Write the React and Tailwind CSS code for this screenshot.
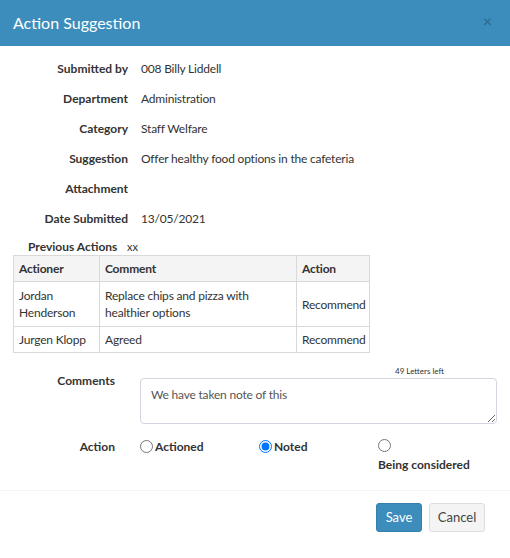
export default function App() {
  const details = [
    ["Submitted by", "008 Billy Liddell"],
    ["Department", "Administration"],
    ["Category", "Staff Welfare"],
    ["Suggestion", "Offer healthy food options in the cafeteria"],
    ["Attachment", ""],
    ["Date Submitted", "13/05/2021"],
  ];

  const cell = "border border-[#d9d9d9] px-[5px] font-normal tracking-[-0.2px]";

  return (
    <div
      className="w-[510px] h-[558px] bg-white text-[12px] text-[#333]"
      style={{ fontFamily: "Lato, 'Liberation Sans', sans-serif" }}
    >
      <div className="h-[46px] bg-[#3c8dbc] px-[13px] flex items-center justify-between">
        <h4 className="text-white text-[16px]">Action Suggestion</h4>
        <span className="text-[#2f6f96] text-[16px] font-bold leading-none -mt-[5px] mr-[5px]">×</span>
      </div>

      <div className="pt-[8px]">
        {details.map(([label, value]) => (
          <div key={label} className="grid grid-cols-[128px_1fr] gap-x-[13px] h-[30px] items-center">
            <div className="text-right font-bold">{label}</div>
            <div className="tracking-[-0.2px]">{value}</div>
          </div>
        ))}

        <div className="flex pl-[28px] pt-[4px] leading-[17px]">
          <span className="font-bold w-[99px]">Previous Actions</span>
          <span className="text-[11px]">xx</span>
        </div>

        <table className="ml-[13px] w-[357px] border-collapse leading-[17px] table-fixed">
          <thead>
            <tr className="bg-[#f4f4f4]">
              <th className={`${cell} w-[86px] py-[4px] text-left !font-bold`}>Actioner</th>
              <th className={`${cell} w-[197px] py-[4px] text-left !font-bold`}>Comment</th>
              <th className={`${cell} py-[4px] text-left !font-bold`}>Action</th>
            </tr>
          </thead>
          <tbody>
            <tr>
              <td className={`${cell} py-[5px]`}>Jordan Henderson</td>
              <td className={`${cell} py-[5px]`}>Replace chips and pizza with healthier options</td>
              <td className={`${cell} py-[5px]`}>Recommend</td>
            </tr>
            <tr>
              <td className={`${cell} py-[4px]`}>Jurgen Klopp</td>
              <td className={`${cell} py-[4px]`}>Agreed</td>
              <td className={`${cell} py-[4px]`}>Recommend</td>
            </tr>
          </tbody>
        </table>

        <div className="grid grid-cols-[115px_357px] gap-x-[25px] mt-[13px]">
          <div className="text-right font-bold pt-[6px]">Comments</div>
          <div>
            <div className="text-[8px] leading-[10px] pl-[255px]">49 Letters left</div>
            <textarea
              className="block w-full h-[46px] border border-[#d2d6de] rounded-[4px] px-[10px] py-[7px] text-[12px] tracking-[-0.2px] text-[#555] mt-[2px] resize-y outline-none"
              defaultValue="We have taken note of this"
            />
          </div>
        </div>

        <div className="grid grid-cols-[115px_357px] gap-x-[25px] mt-[14px] h-[52px]">
          <div className="text-right font-bold">Action</div>
          <div className="grid grid-cols-3 font-bold">
            <label className="flex items-start">
              <input type="radio" name="action" className="m-0 mt-[2px] mr-[2px] w-[13px] h-[13px]" />
              <span>Actioned</span>
            </label>
            <label className="flex items-start">
              <input type="radio" name="action" defaultChecked className="m-0 mt-[2px] mr-[2px] w-[13px] h-[13px]" />
              <span>Noted</span>
            </label>
            <label className="flex flex-col items-start">
              <input type="radio" name="action" className="m-0 mt-[1px] w-[13px] h-[13px]" />
              <span className="mt-[4px]">Being considered</span>
            </label>
          </div>
        </div>
      </div>

      <div className="border-t border-[#f4f4f4] flex justify-end gap-[7px] pt-[12px] pr-[25px]">
        <button className="h-[29px] w-[46px] bg-[#3c8dbc] border border-[#367fa9] rounded-[3px] text-white text-[13px]">Save</button>
        <button className="h-[29px] w-[56px] bg-[#f4f4f4] border border-[#ddd] rounded-[3px] text-[#444] text-[13px]">Cancel</button>
      </div>
    </div>
  );
}
